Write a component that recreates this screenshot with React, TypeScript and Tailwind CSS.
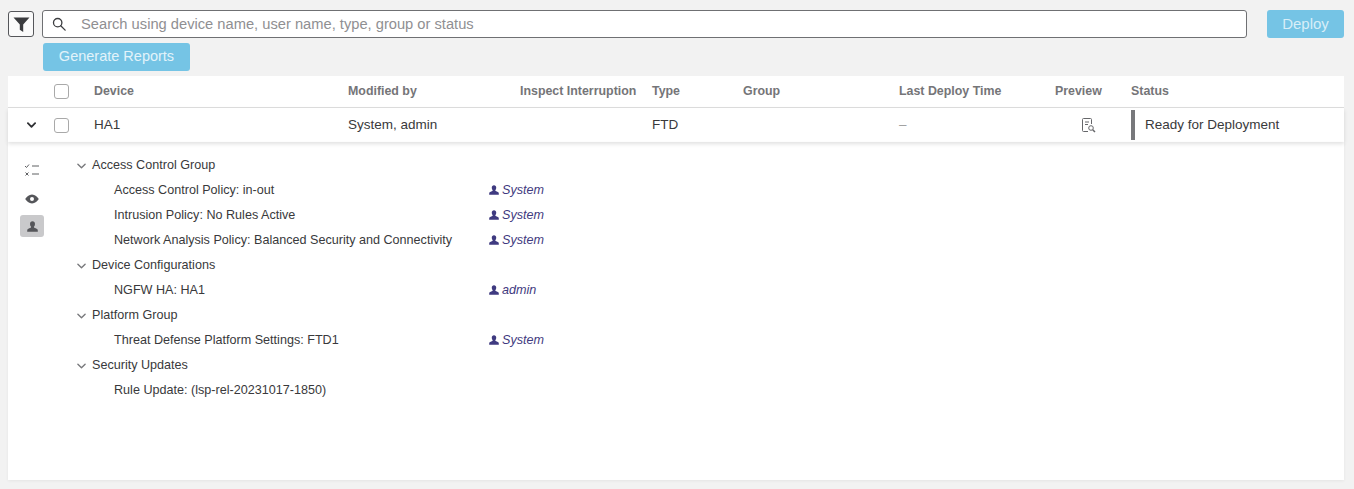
import React from "react";

const Chevron = ({ className }: { className: string }) => (
  <svg viewBox="0 0 10 6" className={className} fill="none" stroke="currentColor" strokeLinecap="round" strokeLinejoin="round">
    <path d="M1 1l4 4 4-4" />
  </svg>
);

const Person = ({ className }: { className: string }) => (
  <svg viewBox="0 0 12 12" className={className} fill="currentColor">
    <path d="M6 .2c1.700 0 2.700 1.200 2.700 3 0 1.300-.5 2.400-1.200 3.100 0 .6.3.9 1 1.200 1.400.5 2.900.9 3.200 2.100l.1 2.200H.2l.1-2.200c.3-1.200 1.800-1.600 3.200-2.100.7-.3 1-.6 1-1.200-.7-.7-1.200-1.800-1.200-3.100C3.300 1.400 4.300.2 6 .2z" />
  </svg>
);

const Check = () => <div className="h-[15px] w-[15px] rounded-[3px] border border-[#a9a9a9] bg-white" />;

type Item = { label: string; user?: string };
const groups: { title: string; items: Item[] }[] = [
  {
    title: "Access Control Group",
    items: [
      { label: "Access Control Policy: in-out", user: "System" },
      { label: "Intrusion Policy: No Rules Active", user: "System" },
      { label: "Network Analysis Policy: Balanced Security and Connectivity", user: "System" },
    ],
  },
  { title: "Device Configurations", items: [{ label: "NGFW HA: HA1", user: "admin" }] },
  { title: "Platform Group", items: [{ label: "Threat Defense Platform Settings: FTD1", user: "System" }] },
  { title: "Security Updates", items: [{ label: "Rule Update: (lsp-rel-20231017-1850)" }] },
];

const gridCols = "grid grid-cols-[86px_254px_172px_132px_91px_156px_156px_76px_1fr] items-center";

export default function App() {
  return (
    <div className="h-[489px] w-[1354px] overflow-hidden bg-[#f2f2f2] pl-2 pr-[10px] pt-[10px] font-['Liberation_Sans',sans-serif] text-[13.500px] text-[#39393b]">
      <div className="flex items-start">
        <button className="mt-px flex h-[26px] w-[26px] items-center justify-center rounded-[3px] border border-[#55565a] bg-[#fafafa]">
          <svg viewBox="0 0 16 16" className="h-[17px] w-[17px]" fill="#3a3b3e">
            <path d="M.5 1.500h15L9.600 8v7L6.400 13V8z" />
          </svg>
        </button>
        <div className="ml-2 flex h-7 w-[1205px] items-center rounded-[3px] border border-[#6f7073] bg-white">
          <svg viewBox="0 0 16 16" className="ml-[9px] h-[14px] w-[14px]" fill="none" stroke="#3c3d40" strokeWidth="1.500">
            <circle cx="6.500" cy="6.500" r="4.800" />
            <path d="M10 10l5 5" strokeLinecap="round" />
          </svg>
          <span className="ml-[15px] text-[14.700px] text-[#8f8f92]">Search using device name, user name, type, group or status</span>
        </div>
        <button className="ml-5 h-7 w-[77px] rounded-[3px] bg-[#75c4e5] text-[15px] text-[#d8eef8]">Deploy</button>
      </div>
      <button className="ml-[35px] mt-[5px] block h-7 w-[147px] rounded-[3px] bg-[#75c4e5] text-[14.500px] text-[#e2f3fa]">Generate Reports</button>

      <div className="mt-[5px] bg-white">
        <div className={`${gridCols} h-8 border-b border-[#dedede] text-[12.400px] font-bold text-[#757578]`}>
          <div className="flex pl-[46px]"><Check /></div>
          <div>Device</div>
          <div>Modified by</div>
          <div>Inspect Interruption</div>
          <div>Type</div>
          <div>Group</div>
          <div>Last Deploy Time</div>
          <div>Preview</div>
          <div>Status</div>
        </div>
        <div className={`${gridCols} h-[34px] shadow-[0_2px_4px_rgba(0,0,0,0.12)]`}>
          <div className="flex items-center pl-[19px]">
            <Chevron className="h-[6px] w-[9px] stroke-[2] text-[#2f3033]" />
            <div className="ml-[18px]"><Check /></div>
          </div>
          <div>HA1</div>
          <div>System, admin</div>
          <div />
          <div>FTD</div>
          <div />
          <div className="text-[#9c9c9c]">–</div>
          <div className="pl-[27px]">
            <svg viewBox="0 0 14 15" className="h-[15px] w-[14px]" fill="none" stroke="#66676a" strokeWidth="1">
              <path d="M9.500 6V1.500a1 1 0 0 0-1-1h-7a1 1 0 0 0-1 1v11a1 1 0 0 0 1 1H6" />
              <path d="M3 4h4M3 6.500h3" />
              <circle cx="9" cy="10" r="2.300" />
              <path d="M10.700 11.700l2.300 2.300" strokeWidth="1.500" />
            </svg>
          </div>
          <div className="flex h-[30px] items-center border-l-[4px] border-[#77787b] pl-[10px]">Ready for Deployment</div>
        </div>
        <div className="flex h-[338px] pt-[10px] text-[12.600px] shadow-[0_1px_3px_rgba(0,0,0,0.06)]">
          <div className="ml-3 flex w-6 flex-col items-center">
            <svg viewBox="0 0 16 14" className="mt-[11px] h-[14px] w-[16px]" fill="none" stroke="#5f6063" strokeWidth="1">
              <path d="M1 3l1.500 1.500L5 1.500M8 3h7M1.500 9.500l3 3M4.500 9.500l-3 3M8 11h7" />
            </svg>
            <svg viewBox="0 0 14 10" className="mt-[17px] h-[10px] w-[14px]" fill="#55565a">
              <path fillRule="evenodd" d="M7 .5C10 .5 12.500 3 13.800 5 12.500 7 10 9.500 7 9.500S1.500 7 .2 5C1.500 3 4 .5 7 .5zM7 3a2 2 0 1 0 0 4 2 2 0 0 0 0-4z" />
            </svg>
            <div className="mt-[11px] flex h-[22px] w-6 items-center justify-center rounded-[3px] bg-[#c9c9cb]">
              <Person className="h-[11px] w-[11px] text-[#55565a]" />
            </div>
          </div>
          <div className="ml-[33px] pt-[1px]">
            {groups.map((g) => (
              <div key={g.title}>
                <div className="flex h-[25px] items-center">
                  <Chevron className="h-[6px] w-[9px] stroke-[1.500] text-[#77787b]" />
                  <span className="ml-[6px]">{g.title}</span>
                </div>
                {g.items.map((it) => (
                  <div key={it.label} className="flex h-[25px] items-center pl-[37px]">
                    <span className="w-[375px] shrink-0">{it.label}</span>
                    {it.user && (
                      <span className="flex items-center italic text-[#3f3a80]">
                        <Person className="mr-[3px] h-[10px] w-[10px]" />
                        {it.user}
                      </span>
                    )}
                  </div>
                ))}
              </div>
            ))}
          </div>
        </div>
      </div>
    </div>
  );
}
